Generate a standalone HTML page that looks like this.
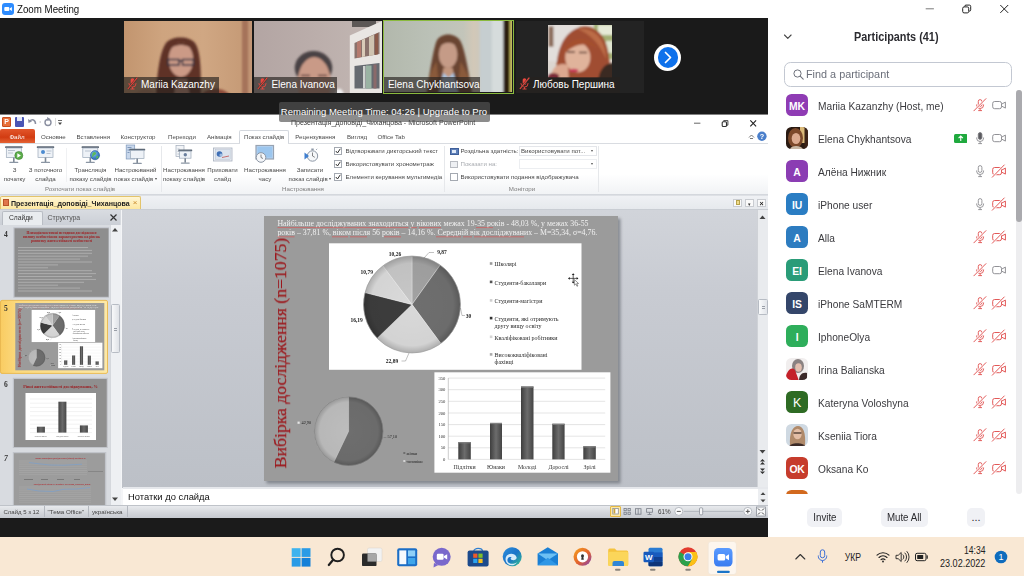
<!DOCTYPE html>
<html lang="uk">
<head>
<meta charset="utf-8">
<title>Zoom Meeting</title>
<style>
*{box-sizing:border-box;margin:0;padding:0}
html,body{width:1024px;height:576px;overflow:hidden;background:#fff}
body{position:relative;font-family:"Liberation Sans",sans-serif;color:#222}
.abs{position:absolute}
/* ---------- zoom title ---------- */
#ztitle{left:0;top:0;width:768px;height:18px;background:#fff}
#ztitle .ico{left:2px;top:3px;width:12px;height:12px;border-radius:3px;background:#2d8cff}
#ztitle .t{left:17px;top:2.5px;font-size:11px;line-height:13px;color:#111;white-space:nowrap;transform-origin:0 50%;transform:scaleX(.885)}
/* ---------- video strip ---------- */
#strip{left:0;top:18.300px;width:768px;height:96px;background:#1a1a1a}
.tile{top:21px;height:72px;overflow:hidden}
.nm{position:absolute;left:0;bottom:0;height:16px;background:rgba(38,34,30,.66);color:#fff;font-size:10px;line-height:16px;padding:0 5px 0 3px;white-space:nowrap}
.nm svg{vertical-align:-2px;margin-right:3px}
#toast{left:278.5px;top:102px;width:211px;height:19.5px;background:rgba(84,84,84,.67);color:#fff;font-size:9.5px;line-height:20.5px;text-align:center;border-radius:2px;white-space:nowrap}
/* ---------- ppt ---------- */
#band{left:0;top:517.5px;width:768px;height:19.5px;background:#1b1b1b}
/* ---------- taskbar ---------- */
#task{left:0;top:537px;width:1024px;height:39px;background:#f9e8d4}
/* ---------- participants ---------- */
#pan{left:768px;top:0;width:256px;height:537px;background:#fff}
</style>
</head>
<body>



<!-- PPT -->
<div id="ppt" class="abs">
<!--PPT_START-->
<style>
#ppt{left:0;top:0;width:768px;height:518px;background:#fff;overflow:hidden;filter:blur(.38px)}
#ppt .r{font-size:6.150px;line-height:8px;color:#4a4a4a;white-space:nowrap}
#ppt .c{text-align:center;transform:translateX(-50%)}
#ppt .tab{top:132.500px}
#ppt .gl{top:185.300px;color:#7d7d7d}
#ppt .sep{top:146px;width:1px;height:46px;background:#e6e8eb}
#ppt .cb{width:8px;height:8px;border:1px solid #a4a9b1;background:#fff}
#ppt .dd{height:10px;border:1px solid #e4e6ea;background:#fff}
</style>
<!-- QAT -->
<div class="abs" style="left:2px;top:117px;width:9px;height:10px;background:#e8703a;border:1px solid #c64e1f;border-radius:1px;color:#fff;font-size:7px;font-weight:bold;line-height:8.500px;text-align:center">P</div>
<div class="abs" style="left:15px;top:117px;width:9px;height:10px;background:#4a55b5;border-radius:1px"></div>
<div class="abs" style="left:17px;top:117px;width:5px;height:4px;background:#e4e8f6"></div>
<svg class="abs" style="left:27px;top:116px" width="40" height="12" viewBox="0 0 40 12"><path d="M2.500 5.500C5 2.500 8.500 3.500 8.500 8" fill="none" stroke="#8a8fa0" stroke-width="1.500"/><path d="M1 3l.5 4 3.500-1.500z" fill="#8a8fa0"/><path d="M12.500 6h1.500" stroke="#aaa" stroke-width=".8"/><circle cx="21" cy="6.500" r="3" fill="none" stroke="#8a8fa0" stroke-width="1.400"/><path d="M20 1l3.500 2-3 2z" fill="#8a8fa0"/><path d="M28.500 2v8" stroke="#ccc" stroke-width=".7"/><path d="M31 6.500h4l-2 2.500z" fill="#444"/><path d="M31 4.500h4" stroke="#444" stroke-width=".8"/></svg>
<div class="abs r" style="left:291px;top:119px;font-size:7.100px;color:#3a3a3a">Презентація_доповіді_Чиханцова - Microsoft PowerPoint</div>
<svg class="abs" style="left:690px;top:116px" width="72" height="14" viewBox="690 116 72 14"><path d="M694 123.200h6.400" stroke="#666" stroke-width="1"/><rect x="722.200" y="121.700" width="4.300" height="4.800" rx="1" fill="none" stroke="#333" stroke-width="1.100"/><path d="M723.700 121.400v-.8h4.200v4.600h-1" fill="none" stroke="#333" stroke-width=".9"/><path d="M750.300 120.300l5.800 6M756.100 120.300l-5.800 6" stroke="#222" stroke-width="1.100"/></svg>

<!-- TABS -->
<div class="abs" style="left:0;top:129px;width:34.500px;height:14.500px;border-radius:2px 2px 0 0;background:linear-gradient(#e2562b,#d23c12 55%,#e86a3a)"></div>
<div class="abs r tab c" style="left:17px;color:#fff">Файл</div>
<div class="abs" style="left:238.500px;top:129.500px;width:50.500px;height:15px;border:1px solid #d3d7dd;border-bottom:none;border-radius:2px 2px 0 0;background:#fff"></div>
<div class="abs r tab" style="left:41px">Основне</div>
<div class="abs r tab" style="left:76.500px">Вставлення</div>
<div class="abs r tab" style="left:120.500px">Конструктор</div>
<div class="abs r tab" style="left:168px">Переходи</div>
<div class="abs r tab" style="left:207px">Анімація</div>
<div class="abs r tab" style="left:244px">Показ слайдів</div>
<div class="abs r tab" style="left:295.300px">Рецензування</div>
<div class="abs r tab" style="left:347px">Вигляд</div>
<div class="abs r tab" style="left:377.500px">Office Tab</div>
<svg class="abs" style="left:746px;top:130px" width="22" height="12" viewBox="0 0 22 12"><path d="M3 7.500l2.500-2.500 2.500 2.500M4 8.500h3" fill="none" stroke="#666" stroke-width=".9"/><circle cx="15.900" cy="6.300" r="4.700" fill="#4a7fcb"/><text x="15.900" y="8.900" font-size="7.300" font-weight="bold" fill="#fff" text-anchor="middle" font-family="Liberation Sans, sans-serif">?</text></svg>

<!-- RIBBON BODY -->
<div class="abs" style="left:0;top:142.700px;width:768px;height:51.800px;border-top:1px solid #d9dce1;background:linear-gradient(#fff 60%,#f1f3f5);z-index:0"></div>
<div class="abs" style="left:239.500px;top:143px;width:48.500px;height:2px;background:#fff"></div>
<div class="abs" style="left:0;top:193.500px;width:768px;height:3px;background:linear-gradient(#cfd3d9,#eceef1)"></div>
<div class="abs sep" style="left:160.500px"></div>
<div class="abs sep" style="left:444px"></div>
<div class="abs sep" style="left:597.500px"></div>
<div class="abs sep" style="left:66px;top:148px;height:34px;background:#f0f1f3"></div>
<!--ICONS_START-->
<svg class="abs" style="left:0;top:143px" width="340" height="24" viewBox="0 143 340 24">
<defs><radialGradient id="gl" cx=".4" cy=".35" r=".7"><stop offset="0" stop-color="#7fc0f0"/><stop offset="1" stop-color="#1f5fae"/></radialGradient></defs>
<rect x="5.1" y="146.3" width="17.4" height="1.700" rx=".5" fill="#5d6876"/><rect x="6.3" y="148.0" width="15.0" height="9.5" fill="#eef2f7" stroke="#9ba8b8" stroke-width=".7"/><rect x="13.0" y="157.5" width="1.600" height="4.500" fill="#7d8896"/><rect x="9.3" y="161.7" width="9" height="1.300" rx=".6" fill="#8b96a4"/><rect x="8" y="150" width="7" height="1" fill="#b8c2cf"/><rect x="8" y="152.500" width="5" height="1" fill="#b8c2cf"/><circle cx="18.800" cy="155.500" r="4" fill="#5cae4a" stroke="#3d7f33" stroke-width=".6"/><path d="M17.300 153.200l3.600 2.300-3.600 2.300z" fill="#fff"/>
<rect x="36.8" y="146.3" width="17.4" height="1.700" rx=".5" fill="#5d6876"/><rect x="38.0" y="148.0" width="15.0" height="9.5" fill="#eef2f7" stroke="#9ba8b8" stroke-width=".7"/><rect x="44.7" y="157.5" width="1.600" height="4.500" fill="#7d8896"/><rect x="41.0" y="161.7" width="9" height="1.300" rx=".6" fill="#8b96a4"/><circle cx="43" cy="152" r="2" fill="#4b8bd0"/><rect x="46.500" y="150.500" width="5" height="1" fill="#b8c2cf"/><rect x="46.500" y="153" width="4" height="1" fill="#b8c2cf"/>
<rect x="81.6" y="146.3" width="17.4" height="1.700" rx=".5" fill="#5d6876"/><rect x="82.8" y="148.0" width="15.0" height="9.5" fill="#eef2f7" stroke="#9ba8b8" stroke-width=".7"/><rect x="89.5" y="157.5" width="1.600" height="4.500" fill="#7d8896"/><rect x="85.8" y="161.7" width="9" height="1.300" rx=".6" fill="#8b96a4"/><rect x="85" y="150.500" width="6" height="1" fill="#b8c2cf"/><circle cx="95" cy="155.200" r="4.600" fill="url(#gl)" stroke="#1c4f93" stroke-width=".5"/><path d="M92.500 153c1.500-1.500 3-1 3.500 0s-1 2-2 2.500-1 2-2 1.500z" fill="#5cb85c"/><path d="M96.500 156c1-.5 2 0 2 1s-1.500 2-2.500 1.500z" fill="#5cb85c"/>
<rect x="126.200" y="145" width="8.500" height="14" fill="#c9d8ec" stroke="#7f98bb" stroke-width=".7"/><rect x="127.500" y="147" width="4" height="1" fill="#7f98bb"/><rect x="127.500" y="149.500" width="3" height="1" fill="#7f98bb"/><rect x="127.500" y="152" width="2" height="1" fill="#7f98bb"/>
<rect x="129.3" y="148.8" width="15.9" height="1.700" rx=".5" fill="#5d6876"/><rect x="130.5" y="150.5" width="13.5" height="8.0" fill="#eef2f7" stroke="#9ba8b8" stroke-width=".7"/><rect x="136.4" y="158.5" width="1.600" height="4.500" fill="#7d8896"/><rect x="132.8" y="162.7" width="9" height="1.300" rx=".6" fill="#8b96a4"/>
<rect x="176" y="145.500" width="8" height="11" fill="#f2f4f7" stroke="#a3adba" stroke-width=".7"/><path d="M177.500 149h2M177.500 151.500h2M177.500 154h2" stroke="#a3adba" stroke-width=".7"/>
<rect x="178.3" y="149.5" width="13.9" height="1.700" rx=".5" fill="#5d6876"/><rect x="179.5" y="151.2" width="11.5" height="7.0" fill="#eef2f7" stroke="#9ba8b8" stroke-width=".7"/><rect x="184.4" y="158.2" width="1.600" height="4.500" fill="#7d8896"/><rect x="180.8" y="162.4" width="9" height="1.300" rx=".6" fill="#8b96a4"/><circle cx="185.300" cy="154.800" r="1.700" fill="#6a7f9e"/>
<rect x="213.500" y="148" width="18.500" height="13" fill="#eef1f5" stroke="#a7b0bd" stroke-width=".8"/><rect x="215.200" y="149.700" width="15" height="9.600" fill="#dbe3ee" stroke="#b5c0cf" stroke-width=".5"/><circle cx="219.500" cy="154" r="2.800" fill="#3f6fb5"/><path d="M222 157.500l7-1.500" stroke="#c05050" stroke-width=".8"/><circle cx="221" cy="155" r="1.600" fill="#9dbbe2"/>
<rect x="256" y="145.500" width="17.500" height="13.500" fill="#b4d3f2" stroke="#98a3b2" stroke-width="1.200"/><rect x="257.500" y="147" width="14.500" height="10.500" fill="#9cc6ee"/><circle cx="261" cy="157.500" r="4.800" fill="#f4f6f9" stroke="#8b95a3" stroke-width="1"/><path d="M261 154.500v3l2 1" fill="none" stroke="#555" stroke-width=".7"/>
<circle cx="312.500" cy="156" r="5.200" fill="#f6f8fa" stroke="#8d97a5" stroke-width="1"/><path d="M312.500 152.500v3.500l2.300 1.300" fill="none" stroke="#555" stroke-width=".7"/><rect x="311.300" y="148.500" width="2.400" height="1.800" fill="#8d97a5"/><path d="M304.500 152.500l4.500 3.500-4.500 3.500z" fill="#3f7fd0"/><path d="M316 150l1.200-1.200" stroke="#8d97a5" stroke-width=".8"/>
</svg>
<!--ICONS_END-->
<div class="abs r c" style="left:14.500px;top:166px;line-height:8.800px">З<br>початку</div>
<div class="abs r c" style="left:45.500px;top:166px;line-height:8.800px">З поточного<br>слайда</div>
<div class="abs r c" style="left:90.500px;top:166px;line-height:8.800px">Трансляція<br>показу слайдів</div>
<div class="abs r c" style="left:135.500px;top:166px;line-height:8.800px">Настроюваний<br>показ слайдів <span style="font-size:4px;vertical-align:1px">▾</span></div>
<div class="abs r c" style="left:184px;top:166px;line-height:8.800px">Настроювання<br>показу слайдів</div>
<div class="abs r c" style="left:222.500px;top:166px;line-height:8.800px">Приховати<br>слайд</div>
<div class="abs r c" style="left:265px;top:166px;line-height:8.800px">Настроювання<br>часу</div>
<div class="abs r c" style="left:310px;top:166px;line-height:8.800px">Записати<br>показ слайдів <span style="font-size:4px;vertical-align:1px">▾</span></div>
<div class="abs r gl c" style="left:80px">Розпочати показ слайдів</div>
<div class="abs r gl c" style="left:303px">Настроювання</div>
<div class="abs r gl c" style="left:522px">Монітори</div>

<div class="abs cb" style="left:333.500px;top:147px"></div>
<div class="abs cb" style="left:333.500px;top:160px"></div>
<div class="abs cb" style="left:333.500px;top:173px"></div>
<svg class="abs" style="left:333.500px;top:147px" width="8" height="34" viewBox="0 0 8 34"><path d="M1.800 4l1.700 2 2.800-4.200M1.800 17l1.700 2 2.800-4.200M1.800 30l1.700 2 2.800-4.200" fill="none" stroke="#333" stroke-width="1"/></svg>
<div class="abs r" style="left:345.500px;top:147px">Відтворювати дикторський текст</div>
<div class="abs r" style="left:345.500px;top:160px">Використовувати хронометраж</div>
<div class="abs r" style="left:345.500px;top:173px">Елементи керування мультимедіа</div>

<div class="abs" style="left:449.500px;top:148px;width:9px;height:6.500px;border:1px solid #3f5f9a;background:#5d7fb8"></div>
<div class="abs" style="left:452px;top:150px;width:4px;height:2.500px;background:#dfe9f7"></div>
<div class="abs" style="left:449.500px;top:161px;width:8.500px;height:6.500px;border:1px solid #b9bcc2;background:#eef0f3"></div>
<div class="abs r" style="left:460.500px;top:147px">Роздільна здатність:</div>
<div class="abs r" style="left:460.500px;top:160px;color:#a9acb1">Показати на:</div>
<div class="abs dd" style="left:518.500px;top:146px;width:78px"></div>
<div class="abs dd" style="left:518.500px;top:159px;width:78px;border-color:#eceef1"></div>
<div class="abs r" style="left:521px;top:147px">Використовувати пот...</div>
<div class="abs r" style="left:590.500px;top:147px;font-size:4px;color:#555">▾</div>
<div class="abs r" style="left:590.500px;top:160px;font-size:4px;color:#555">▾</div>
<div class="abs cb" style="left:449.500px;top:173px"></div>
<div class="abs r" style="left:460.500px;top:173px">Використовувати подання відображувача</div>

<!-- DOC TAB BAR -->
<div class="abs" style="left:0;top:196px;width:768px;height:13.500px;background:linear-gradient(#eff1f4,#e6e9ed);border-bottom:1px solid #c9cdd3"></div>
<div class="abs" style="left:0;top:196.400px;width:140.500px;height:12.800px;border:1px solid #e3c46b;border-bottom:none;border-radius:2px 2px 0 0;background:linear-gradient(#fff6d6,#fde7a0)"></div>
<div class="abs" style="left:3px;top:199px;width:6px;height:7px;background:#e0764a;border:1px solid #b9532a"></div>
<div class="abs" style="left:11px;top:198.800px;font-size:7.050px;font-weight:bold;line-height:9px;color:#222;white-space:nowrap">Презентація_доповіді_Чиханцова</div>
<div class="abs" style="left:132.800px;top:198.300px;font-size:8px;line-height:9px;color:#c98a2a">×</div>
<div class="abs" style="left:733px;top:198.500px;width:9px;height:8.500px;border:1px solid #c9ccd1;background:#fafafa"></div>
<div class="abs" style="left:735.500px;top:200.300px;width:4px;height:5px;background:#f0dc8a;border:.5px solid #b7a24a"></div>
<div class="abs" style="left:745px;top:198.500px;width:9px;height:8.500px;border:1px solid #c9ccd1;background:#fafafa;font-size:5px;line-height:8px;text-align:center;color:#333">▾</div>
<div class="abs" style="left:757px;top:198.500px;width:9px;height:8.500px;border:1px solid #c9ccd1;background:#fafafa;font-size:7px;font-weight:bold;line-height:7px;text-align:center;color:#222">×</div>

<!-- LEFT PANE -->
<div class="abs" style="left:0;top:209.500px;width:122.500px;height:295.500px;background:#d8dbe0;border-right:2px solid #f4f5f7"></div>
<div class="abs" style="left:0;top:209.500px;width:120px;height:15.300px;background:linear-gradient(#d9dce1,#cbcfd6)"></div>
<div class="abs" style="left:1.500px;top:210.500px;width:41px;height:14.500px;background:#e9ecef;border:1px solid #b9bdc4;border-bottom:none;border-radius:2px 2px 0 0"></div>
<div class="abs r" style="left:9px;top:212.500px;font-size:6.700px;line-height:10px;color:#333">Слайди</div>
<div class="abs r" style="left:47.500px;top:212.500px;font-size:6.900px;line-height:10px;color:#555">Структура</div>
<svg class="abs" style="left:109px;top:213px" width="9" height="9" viewBox="0 0 9 9"><path d="M1.500 1.500l6 6M7.500 1.500l-6 6" stroke="#333" stroke-width="1.200"/></svg>
<div class="abs" style="left:109.500px;top:225px;width:11px;height:280px;background:#eef0f3;border-left:1px solid #d5d8dd"></div>
<div class="abs" style="left:110.500px;top:304px;width:9.500px;height:49px;background:linear-gradient(90deg,#f8f9fa,#dfe2e7);border:1px solid #b7bcc4;border-radius:1.500px"></div>
<div class="abs" style="left:114px;top:327.500px;width:3px;height:3px;border-top:1px solid #9a9fa8;border-bottom:1px solid #9a9fa8"></div>
<svg class="abs" style="left:110px;top:225px" width="10" height="280" viewBox="0 0 10 280"><path d="M2 6.500l3-3.500 3 3.500z" fill="#444"/><path d="M2 272.500l3 3.500 3-3.500z" fill="#444"/></svg>
<!--THUMBS_START-->
<svg class="abs" style="left:0;top:225px" width="109" height="279.500" viewBox="0 225 109 279.500" font-family="Liberation Serif, serif">
<defs><linearGradient id="hl" x1="0" x2="1"><stop offset="0" stop-color="#f9cc62"/><stop offset=".15" stop-color="#fbd97e"/><stop offset="1" stop-color="#fde9a8"/></linearGradient><linearGradient id="bg2" x1="0" x2="1"><stop offset="0" stop-color="#444"/><stop offset=".5" stop-color="#6a6a6a"/><stop offset="1" stop-color="#484848"/></linearGradient></defs>
<rect x="13.300" y="227.300" width="96" height="70.500" fill="#c1c4ca"/><rect x="14.500" y="228.300" width="94" height="68.500" fill="#8e8e8e"/>
<g font-size="3.700" font-weight="bold" fill="#a02226" text-anchor="middle"><text x="61.500" y="234">Психодіагностичні методики дослідження</text><text x="61.500" y="238.200">впливу особистісних характеристик на рівень</text><text x="61.500" y="242.400">розвитку життєстійкості особистості</text></g>
<g stroke="#c4c4c4" stroke-width=".7" opacity=".8">
<path d="M18 247.5h70"/>
<path d="M18 250.4h74"/>
<path d="M18 253.3h74"/>
<path d="M18 256.2h70"/>
<path d="M18 259.1h62"/>
<path d="M18 262.0h74"/>
<path d="M18 264.9h40"/>
<path d="M18 267.8h30"/>
<path d="M18 270.7h74"/>
<path d="M18 273.6h78"/>
<path d="M18 276.5h74"/>
<path d="M18 279.4h78"/>
<path d="M18 282.3h66"/>
<path d="M18 285.2h40"/>
<path d="M18 288.1h62"/>
<path d="M18 291.0h74"/>
</g>
<rect x=".500" y="300.400" width="107" height="73" rx="1.500" fill="url(#hl)" stroke="#eab23c" stroke-width=".8"/>
<use href="#slideg" transform="translate(15.300 303) scale(.2514 .2540) translate(-264 -216)"/><use href="#slideg2" transform="translate(15.300 303) scale(.2514 .2540) translate(-264 -216)"/>
<rect x="12.800" y="377.800" width="95" height="70.200" fill="#c1c4ca"/><rect x="14" y="379" width="92.700" height="68" fill="#8f8f8f"/>
<text x="60.500" y="388.300" font-size="4.200" font-weight="bold" fill="#9c1c20" text-anchor="middle">Рівні життєстійкості досліджуваних, %</text>
<rect x="25.500" y="393" width="70.500" height="47" fill="#fff"/>
<g stroke="#d5d5d5" stroke-width=".35"><path d="M30 432.6h62"/><path d="M30 428.4h62"/><path d="M30 424.2h62"/><path d="M30 420.0h62"/><path d="M30 415.8h62"/><path d="M30 411.6h62"/><path d="M30 407.4h62"/><path d="M30 403.2h62"/><path d="M30 399.0h62"/></g>
<rect x="36.900" y="426.700" width="8" height="5.900" fill="url(#bg2)"/><rect x="58.400" y="401.700" width="8" height="30.900" fill="url(#bg2)"/><rect x="79.900" y="425.400" width="8" height="7.200" fill="url(#bg2)"/>
<g font-size="1.900" fill="#444" text-anchor="middle"><text x="40.900" y="436.500">низький рівень</text><text x="62.400" y="436.500">середній рівень</text><text x="83.900" y="436.500">високий рівень</text></g>
<rect x="12.800" y="452" width="93.500" height="54" fill="#c1c4ca"/><rect x="13.900" y="453.200" width="91" height="53" fill="#9c9c9c"/>
<g font-size="2.050" font-weight="bold" fill="#b23036" text-anchor="middle"><text x="60.500" y="459">Вплив самооцінки досліджуваних (жінки) на рівень їх</text><text x="62" y="485">Досліджувані жінки та чоловіки: залучення, контроль, ризик</text></g>
<g stroke="#b9b9b9" stroke-width=".3"><path d="M19 461.0h68"/><path d="M19 462.9h68"/><path d="M19 464.8h68"/><path d="M19 466.7h68"/><path d="M19 468.6h68"/><path d="M19 470.5h68"/><path d="M19 472.4h68"/><path d="M19 474.3h68"/><path d="M19 487.0h72"/><path d="M19 488.9h72"/><path d="M19 490.8h72"/><path d="M19 492.7h72"/><path d="M19 494.6h72"/><path d="M19 496.5h72"/><path d="M19 498.4h72"/><path d="M19 500.3h72"/><path d="M19 502.2h72"/></g>
<path d="M29 462.500l9 1.200 12 1.300 14 .2 18-1" fill="none" stroke="#7f9fc6" stroke-width=".8"/><path d="M27 489l12 2 14 .5 11-2.300 12-.2 14-1.500" fill="none" stroke="#7f9fc6" stroke-width=".8"/>
<path d="M88 471.500h15" stroke="#666" stroke-width=".4"/><path d="M24 479.500h9M41 479.500h7M57 479.500h7M74 479.500h6" stroke="#555" stroke-width=".5"/>
<g font-size="7.500" font-weight="bold" fill="#333"><text x="4" y="236.500">4</text><text x="4" y="311">5</text><text x="4" y="386.500">6</text><text x="4" y="461" font-style="italic">7</text></g>
</svg>
<!--THUMBS_END-->
<!-- MAIN AREA -->
<div class="abs" style="left:122px;top:209.500px;width:635.500px;height:278px;background:linear-gradient(#d1d4da,#c8cbd2 30%,#bcc0c7)"></div>
<!--SLIDE_START-->
<svg class="abs" style="left:260px;top:212px" width="364" height="276" viewBox="260 212 364 276" font-family="Liberation Serif, serif">
<defs>
<radialGradient id="pg" cx=".5" cy=".5" r=".5"><stop offset="0" stop-color="#000" stop-opacity="0"/><stop offset=".85" stop-color="#000" stop-opacity=".03"/><stop offset="1" stop-color="#000" stop-opacity=".2"/></radialGradient>
<linearGradient id="bg" x1="0" x2="1"><stop offset="0" stop-color="#3e3e3e"/><stop offset=".5" stop-color="#6c6c6c"/><stop offset="1" stop-color="#444"/></linearGradient>
<filter id="sb" x="-5%" y="-5%" width="110%" height="110%"><feGaussianBlur stdDeviation="1.6"/></filter>
<filter id="tb" x="-5%" y="-5%" width="110%" height="110%"><feGaussianBlur stdDeviation=".25"/></filter>
</defs>
<rect x="266.500" y="218.500" width="354" height="265" fill="#6f737a" opacity=".75" filter="url(#sb)"/>
<g id="slideg"><rect x="264" y="216" width="354" height="265" fill="#9b9b9b"/>
<g font-size="7.850" fill="#f1f1f1" filter="url(#tb)"><text x="277.400" y="226">Найбільше досліджуваних знаходиться у вікових межах 19-35 років  - 48,03 %, у межах 36-55</text><text x="277.400" y="235.200">років – 37,81 %, віком після 56 років – 14,16 %. Середній вік досліджуваних – М=35,34, σ=4,76.</text></g>
<g stroke="#d25a5a" stroke-width=".8" opacity=".9"><path d="M277.500 227.600h131M411 227.600h6M419 227.600h22M476 227.600h17"/><path d="M277.500 236.800h17M332 236.800h16M350 236.800h17M384 236.800h17M436 236.800h25M463 236.800h9M474 236.800h50"/></g>
<text transform="translate(286 468.300) rotate(-90)" font-size="17.700" fill="#9c1a1e" stroke="#9c1a1e" stroke-width=".25" textLength="230.500" lengthAdjust="spacingAndGlyphs" filter="url(#tb)">Вибірка дослідження (n=1075)</text>
<rect x="329" y="243.300" width="252.500" height="126.500" fill="#fff"/>
<path d="M412.0 304.5L412.00 256.00A48.5 48.5 0 0 1 440.19 265.03Z" fill="#a2a2a2" stroke="#f2f2f2" stroke-width=".35"/>
<path d="M412.0 304.5L440.19 265.03A48.5 48.5 0 0 1 440.83 343.50Z" fill="#6f6f6f" stroke="#f2f2f2" stroke-width=".35"/>
<path d="M412.0 304.5L440.83 343.50A48.5 48.5 0 0 1 377.15 338.23Z" fill="#d9d9d9" stroke="#f2f2f2" stroke-width=".35"/>
<path d="M412.0 304.5L377.15 338.23A48.5 48.5 0 0 1 364.99 292.59Z" fill="#3d3d3d" stroke="#f2f2f2" stroke-width=".35"/>
<path d="M412.0 304.5L364.99 292.59A48.5 48.5 0 0 1 382.86 265.73Z" fill="#dadada" stroke="#f2f2f2" stroke-width=".35"/>
<path d="M412.0 304.5L382.86 265.73A48.5 48.5 0 0 1 412.00 256.00Z" fill="#c7c7c7" stroke="#f2f2f2" stroke-width=".35"/>
<circle cx="412" cy="304.5" r="48.5" fill="url(#pg)"/>
<circle cx="412" cy="304.5" r="48.5" fill="none" stroke="#8a8a8a" stroke-width=".5"/>
<g fill="none" stroke="#666" stroke-width=".4"><path d="M424 258l5-5.500h5"/><path d="M460.500 308l1.500 7.500h3"/><path d="M409 353l-3.500 8h-4"/></g>
<g font-size="5.500" font-weight="bold" fill="#222" text-anchor="middle" filter="url(#tb)">
<text x="442" y="253.5">9,87</text>
<text x="395" y="256">10,26</text>
<text x="366.7" y="274">10,79</text>
<text x="356.6" y="322">16,19</text>
<text x="392" y="363.2">22,89</text>
<text x="468.5" y="318">30</text>
</g>
<g font-size="6" fill="#2a2a2a" filter="url(#tb)">
<rect x="489.800" y="262.2" width="2.600" height="2.600" fill="#9a9a9a"/><text x="494.500" y="266.2">Школярі</text>
<rect x="489.800" y="280.6" width="2.600" height="2.600" fill="#555"/><text x="494.500" y="284.6">Студенти-бакалаври</text>
<rect x="489.800" y="299.1" width="2.600" height="2.600" fill="#cfcfcf"/><text x="494.500" y="303.1">Студенти-магістри</text>
<rect x="489.800" y="316.8" width="2.600" height="2.600" fill="#333"/><text x="494.500" y="320.8">Студенти, які отримують</text>
<rect x="489.800" y="335.5" width="2.600" height="2.600" fill="#d5d5d5"/><text x="494.500" y="339.5">Кваліфіковані робітники</text>
<rect x="489.800" y="353.1" width="2.600" height="2.600" fill="#aaa"/><text x="494.500" y="357.1">Висококваліфіковані</text>
<text x="494.500" y="328.300">другу вищу освіту</text><text x="494.500" y="364.300">фахівці</text>
</g>
</g><g transform="translate(573.200 278.400) scale(.8)" stroke="#222" stroke-width=".9" fill="none"><path d="M0 -5.500v11M-5.500 0h11"/><path d="M0 -6.500l-1.800 2.200h3.600zM0 6.500l-1.800-2.200h3.600zM-6.500 0l2.200-1.800v3.600zM6.500 0l-2.200-1.800v3.600z" fill="#222" stroke="none"/><path d="M1.500 1.500l0 7 1.800-1.600 1.400 3 1.100-.5-1.400-2.900 2.300-.2z" fill="#fff" stroke="#222" stroke-width=".6"/></g>
<g id="slideg2"><rect x="434.400" y="372.300" width="176" height="100.400" fill="#fff"/>
<g stroke="#c9c9c9" stroke-width=".5">
<path d="M448.300 459.4H605.200"/>
<path d="M448.300 447.8H605.200"/>
<path d="M448.300 436.2H605.200"/>
<path d="M448.300 424.6H605.200"/>
<path d="M448.300 413.0H605.200"/>
<path d="M448.300 401.3H605.200"/>
<path d="M448.300 389.7H605.200"/>
<path d="M448.300 378.1H605.200"/>
</g>
<path d="M448.300 378V459.400" stroke="#999" stroke-width=".5"/>
<g font-size="4.600" fill="#333" text-anchor="end" filter="url(#tb)">
<text x="445.300" y="461.0">0</text>
<text x="445.300" y="449.4">50</text>
<text x="445.300" y="437.8">100</text>
<text x="445.300" y="426.2">150</text>
<text x="445.300" y="414.6">200</text>
<text x="445.300" y="402.9">250</text>
<text x="445.300" y="391.3">300</text>
<text x="445.300" y="379.7">350</text>
</g>
<rect x="458.3" y="442.1" width="12.5" height="17.30" fill="url(#bg)"/>
<rect x="458.3" y="442.1" width="12.5" height="1.200" fill="#808080"/>
<rect x="490" y="422.9" width="12.0" height="36.50" fill="url(#bg)"/>
<rect x="490" y="422.9" width="12.0" height="1.200" fill="#808080"/>
<rect x="521" y="386.5" width="12.5" height="72.90" fill="url(#bg)"/>
<rect x="521" y="386.5" width="12.5" height="1.200" fill="#808080"/>
<rect x="552.3" y="423.75" width="12.3" height="35.65" fill="url(#bg)"/>
<rect x="552.3" y="423.75" width="12.3" height="1.200" fill="#808080"/>
<rect x="583.3" y="446.25" width="12.5" height="13.15" fill="url(#bg)"/>
<rect x="583.3" y="446.25" width="12.5" height="1.200" fill="#808080"/>
<g font-size="5.900" fill="#333" text-anchor="middle" filter="url(#tb)">
<text x="464.6" y="468.600">Підлітки</text>
<text x="496.0" y="468.600">Юнаки</text>
<text x="527.2" y="468.600">Молоді</text>
<text x="558.5" y="468.600">Дорослі</text>
<text x="589.5" y="468.600">Зрілі</text>
</g>
<path d="M348.7 431.2L348.70 396.90A34.3 34.3 0 1 1 333.90 462.14Z" fill="#6e6e6e" stroke="#888" stroke-width=".3"/>
<path d="M348.7 431.2L333.90 462.14A34.3 34.3 0 0 1 348.70 396.90Z" fill="#bdbdbd" stroke="#ddd" stroke-width=".3"/>
<circle cx="348.7" cy="431.2" r="34.3" fill="url(#pg)"/>
<circle cx="348.7" cy="431.2" r="34.3" fill="none" stroke="#7a7a7a" stroke-width=".6"/>
<g font-size="4.300" fill="#222" filter="url(#tb)"><rect x="297.500" y="421.600" width="2.200" height="2.200" fill="#e6e6e6"/><text x="301.500" y="424.400">42,90</text><text x="387.500" y="438">57,10</text><path d="M383.500 437.500h3" stroke="#666" stroke-width=".4"/><rect x="403.300" y="452" width="2" height="2" fill="#6e6e6e"/><text x="406.500" y="454.600">жінки</text><rect x="403.300" y="460" width="2" height="2" fill="#d5d5d5"/><text x="406.500" y="462.600">чоловіки</text></g>
</g></svg>
<!--SLIDE_END-->
<div class="abs" style="left:757px;top:209.500px;width:11px;height:278.500px;background:#e9ebee;border-left:1px solid #cfd2d7"></div>
<div class="abs" style="left:758px;top:299px;width:9.500px;height:16px;background:linear-gradient(90deg,#fafbfc,#e1e4e9);border:1px solid #b7bcc4;border-radius:1.500px"></div>
<div class="abs" style="left:761.500px;top:305.500px;width:3px;height:3px;border-top:1px solid #9a9fa8;border-bottom:1px solid #9a9fa8"></div>
<svg class="abs" style="left:757px;top:211px" width="11" height="277" viewBox="0 0 11 277"><path d="M2.500 8l3-3.500 3 3.500z" fill="#444"/><path d="M2.500 239l3 3.500 3-3.500z" fill="#444"/><path d="M3 250.500l2.500-2.500 2.500 2.500zM3 253.500l2.500-2.500 2.500 2.500z" fill="#333"/><path d="M3 257.500l2.500 2.500 2.500-2.500zM3 260.500l2.500 2.500 2.500-2.500z" fill="#333"/></svg>

<!-- NOTES -->
<div class="abs" style="left:123px;top:488px;width:645px;height:16.500px;background:#fff;border-top:1px solid #c9ccd2"></div>
<div class="abs" style="left:123px;top:486.500px;width:645px;height:2px;background:#e6e8ec"></div>
<div class="abs" style="left:128px;top:491px;font-size:9.400px;line-height:12px;color:#111;white-space:nowrap">Нотатки до слайда</div>
<div class="abs" style="left:757.500px;top:488.500px;width:10.500px;height:16px;background:#eceef1"></div>
<svg class="abs" style="left:757.500px;top:488.500px" width="10" height="16" viewBox="0 0 10 16"><path d="M2.500 6l2.500-2.800 2.500 2.800z" fill="#444"/><path d="M2.500 10.500l2.500 2.800 2.500-2.800z" fill="#444"/></svg>

<!-- STATUS BAR -->
<div class="abs" style="left:0;top:504.500px;width:768px;height:13.500px;background:linear-gradient(#e8eaed,#d2d5da 60%,#c6cad0);border-top:1px solid #bfc3c9"></div>
<div class="abs r" style="left:3.500px;top:507.500px;font-size:6px;color:#444">Слайд 5 з 12</div>
<div class="abs r" style="left:47.500px;top:507.500px;font-size:6.200px;color:#444">"Тема Office"</div>
<div class="abs r" style="left:92px;top:507.500px;font-size:6.200px;color:#444">українська</div>
<div class="abs" style="left:43.500px;top:506px;width:1px;height:11px;background:#b4b8bf"></div>
<div class="abs" style="left:88px;top:506px;width:1px;height:11px;background:#b4b8bf"></div>
<div class="abs" style="left:126.500px;top:506px;width:1px;height:11px;background:#b4b8bf"></div>
<div class="abs" style="left:610px;top:505.500px;width:10.500px;height:11px;background:#fde9a6;border:1px solid #e5b945;border-radius:1px"></div>
<svg class="abs" style="left:610px;top:505px" width="158" height="13" viewBox="0 0 158 13"><rect x="2.800" y="3.500" width="5.500" height="5.500" fill="#fff" stroke="#8a8f98" stroke-width=".8"/><rect x="3.500" y="4" width="1.800" height="4.500" fill="#c9a23a"/><g fill="none" stroke="#777c86" stroke-width=".8"><rect x="14" y="3.500" width="2.300" height="2.200"/><rect x="18" y="3.500" width="2.300" height="2.200"/><rect x="14" y="7.200" width="2.300" height="2.200"/><rect x="18" y="7.200" width="2.300" height="2.200"/><rect x="25.500" y="3.700" width="5.500" height="5.500"/><path d="M28.200 3.700v5.500"/><path d="M36.500 3.500h6v3.800h-6zM39.500 7.300v2M37.500 9.500h4"/></g><text x="48" y="9" font-size="6.300" fill="#444" font-family="Liberation Sans, sans-serif">61%</text><circle cx="68.800" cy="6.400" r="4" fill="#fafbfc" stroke="#a9aeb6" stroke-width=".8"/><path d="M66.800 6.400h4" stroke="#555" stroke-width="1"/><path d="M74 6.400h59" stroke="#a9aeb6" stroke-width=".8"/><rect x="89.500" y="2.800" width="3.200" height="7" rx="1" fill="#f4f5f7" stroke="#8a8f98" stroke-width=".8"/><circle cx="137.800" cy="6.400" r="4" fill="#fafbfc" stroke="#a9aeb6" stroke-width=".8"/><path d="M135.800 6.400h4M137.800 4.400v4" stroke="#555" stroke-width="1"/><rect x="146.500" y="2" width="9" height="9" fill="#f6f7f8" stroke="#8a8f98" stroke-width=".8"/><path d="M148 3.500l2 2M154 3.500l-2 2M148 9.500l2-2M154 9.500l-2-2" stroke="#444" stroke-width="1"/></svg>
<!--PPT_END-->
</div>
<div id="band" class="abs"></div>
<!-- VIDEO STRIP -->
<div id="strip" class="abs"></div>
<!--TILES_START-->
<svg width="0" height="0" style="position:absolute">
  <defs>
    <filter id="b1" x="-10%" y="-10%" width="120%" height="120%"><feGaussianBlur stdDeviation="1.1"/></filter>
    <filter id="b2" x="-10%" y="-10%" width="120%" height="120%"><feGaussianBlur stdDeviation="2.2"/></filter>
    <filter id="b0" x="-10%" y="-10%" width="120%" height="120%"><feGaussianBlur stdDeviation=".6"/></filter>
    <symbol id="micoff" viewBox="0 0 12 14">
      <rect x="4" y="1.200" width="4" height="7.300" rx="2" fill="#e8473f"/>
      <path d="M2.200 6.500v.6a3.800 3.800 0 0 0 7.600 0v-.6M6 11v2M3.800 13h4.400" fill="none" stroke="#e8473f" stroke-width="1"/>
      <path d="M11 .8L1.200 12.800" stroke="#3a302a" stroke-width="2.200"/>
      <path d="M11.300 .5L.9 13" stroke="#e8473f" stroke-width="1.150"/>
    </symbol>
  </defs>
</svg>

<!-- tile 1 -->
<div class="tile abs" style="left:124px;width:128px">
  <svg width="128" height="72" viewBox="0 0 128 72" style="display:block">
    <defs><linearGradient id="t1g" x1="0" x2="1"><stop offset="0" stop-color="#c2956f"/><stop offset=".3" stop-color="#cea47f"/><stop offset=".62" stop-color="#d0a783"/><stop offset=".9" stop-color="#c79c78"/></linearGradient></defs>
    <rect width="128" height="72" fill="url(#t1g)"/>
    <g filter="url(#b1)">
      <rect x="118" y="-2" width="6.500" height="80" fill="#a5735a"/>
      <rect x="124.500" y="-2" width="5" height="80" fill="#c39676"/>
      <path d="M32 76 C33 52 36 30 42 22 C47 14.500 66 14.500 71 22 C77 30 77 52 77 76Z" fill="#5f3328"/>
      <ellipse cx="56.900" cy="38.500" rx="12.300" ry="17.500" fill="#cb9a86"/>
      <path d="M44 30 C48 18 66 18 70 30 C64 22 50 22 44 30Z" fill="#5f3328"/>
      <path d="M44 38.500h11v5.500h-11zM58.500 38.500h11v5.500h-11zM55 40h3.500" fill="none" stroke="#2a2c40" stroke-width="1.400"/>
      <path d="M50 76 L52 58 L63 58 L66 76Z" fill="#c6937f"/>
      <path d="M76 76 C80 66 100 64 108 76Z" fill="#8f4e3b"/>
      <path d="M8 76 C16 66 30 64 34 76Z" fill="#a9705a" opacity=".5"/>
    </g>
  </svg>
  <div class="nm" style="width:95px"><svg width="11" height="13"><use href="#micoff"/></svg>Mariia Kazanzhy</div>
</div>

<!-- tile 2 -->
<div class="tile abs" style="left:254.400px;width:128px">
  <svg width="128" height="72" viewBox="0 0 128 72" style="display:block">
    <defs><linearGradient id="t2g" x1="0" x2="1"><stop offset="0" stop-color="#b3a5a3"/><stop offset=".5" stop-color="#bbaeab"/><stop offset="1" stop-color="#c3b8b4"/></linearGradient></defs>
    <rect width="128" height="72" fill="url(#t2g)"/>
    <g filter="url(#b0)">
      <rect x="98" y="-2" width="24" height="8" fill="#5c5856"/>
      <path d="M95.800 14.600 L128 0 L128 74 L95.800 74Z" fill="#e9e6e3"/>
      <path d="M100.500 22 L125.500 11 L125.500 33 L100.500 37.600Z" fill="#8a726c"/>
      <path d="M103 21 L107 19.300 L107 36 L103 36.800Z" fill="#b57a6e"/>
      <path d="M108 19 L111 17.600 L111 35.500 L108 36Z" fill="#d9cbb8"/>
      <path d="M115 16 L120 13.800 L120 34 L115 35Z" fill="#cfc3b0"/>
      <path d="M121 13.500 L124 12 L124 33.300 L121 34Z" fill="#8a5a4a"/>
      <path d="M100.500 45 L125.500 42 L125.500 67.400 L100.500 67.400Z" fill="#666a70"/>
      <rect x="112" y="44.500" width="5.500" height="23" fill="#9ab3a3"/>
      <rect x="109" y="45" width="2.500" height="22.400" fill="#cfd3d0"/>
      <rect x="119.500" y="43.500" width="3" height="24" fill="#8a6a6a"/>
    </g>
    <g filter="url(#b1)">
      <ellipse cx="59.500" cy="47" rx="18.800" ry="17" fill="#4a4244"/>
      <ellipse cx="60.200" cy="62" rx="16.600" ry="26" fill="#c99a87"/>
      <path d="M47 54.500h9M64 54.500h9" stroke="#5a3a34" stroke-width="1.600"/>
      <path d="M80 74 C82 66 88 65 90 74Z" fill="#eeeeee"/>
    </g>
  </svg>
  <div class="nm" style="width:82.300px"><svg width="11" height="13"><use href="#micoff"/></svg>Elena Ivanova</div>
</div>

<!-- tile 3 active -->
<div class="tile abs" style="left:383.400px;top:19.800px;width:131px;height:74px;border:1.500px solid #8aba3e;">
  <svg width="128" height="71" viewBox="0 0 127 70" preserveAspectRatio="none" style="display:block">
    <defs><linearGradient id="t3g" x1="0" x2="1"><stop offset="0" stop-color="#b2b8ac"/><stop offset=".4" stop-color="#bcc2b8"/><stop offset=".62" stop-color="#c3c5ba"/><stop offset=".7" stop-color="#d2c8b8"/><stop offset=".75" stop-color="#cdc8bc"/></linearGradient></defs>
    <rect width="127" height="70" fill="url(#t3g)"/>
    <g filter="url(#b1)">
      <rect x="95" y="-2" width="24" height="76" fill="#c6ced0"/>
      <rect x="107" y="-2" width="12" height="76" fill="#d6dcdc"/>
      <rect x="118.500" y="-2" width="6.500" height="76" fill="#2a1a10"/>
      <rect x="124.600" y="-2" width="4" height="76" fill="#c4bc5e"/>
      <path d="M42 74 C45 52 49 28 52 20 C56 11 71 11 76 20 C81 30 84 52 88 74Z" fill="#6a4430"/>
      <path d="M44 60 C46 50 50 44 52 40 L54 58Z M86 60 C82 50 78 44 76 40 L74 58Z" fill="#8a5a3a"/>
      <ellipse cx="63.600" cy="33" rx="9.300" ry="13.300" fill="#c59b87"/>
      <path d="M54 26 C57 15 70 15 73.500 26 C68 20 60 20 54 26Z" fill="#6a4430"/>
      <path d="M55 72 L59 46 L68 46 L73 72Z" fill="#c2977f"/>
      <path d="M54 72 L59 51 L64 56 L69 51 L74 72Z" fill="#a9c5e2"/>
    </g>
  </svg>
  <div class="nm" style="padding-left:3.500px;width:95.500px">Elena Chykhantsova</div>
</div>

<!-- tile 4 -->
<div class="tile abs" style="left:516px;width:128px;background:#232323">
  <svg width="64.400" height="52.800" viewBox="0 0 64.400 52.800" style="position:absolute;left:31.800px;top:3.800px">
    <rect width="64.400" height="52.800" fill="#dcd6d0"/>
    <g filter="url(#b1)">
      <rect x="0" y="0" width="30" height="36" fill="#e2dedb"/>
      <rect x=".700" y="1.400" width="4.700" height="20.300" fill="#8a6a58"/>
      <rect x="46" y="-2" width="20" height="36" fill="#a3b074"/>
      <rect x="50" y="0" width="16" height="10" fill="#e6ead6"/>
      <rect x="58" y="16" width="8" height="12" fill="#dfe4cf"/>
      <path d="M9 56 C6 30 14 4 36 1.500 C56 2 64 22 61 56Z" fill="#a04e32"/>
      <path d="M30 4 C46 2 58 14 58 34 C52 20 44 10 30 4Z" fill="#bb6c46"/>
      <ellipse cx="29.800" cy="32.500" rx="12.600" ry="15" fill="#e0b39b"/>
      <path d="M15 30 C18 12 40 8 50 24 C40 16 26 18 15 30Z" fill="#a5502f"/>
      <path d="M19 27h8M31 27.500h8" stroke="#5a3a30" stroke-width="1.300"/>
      <path d="M2.700 56 C2 44 10 36 20 40 L21 56Z" fill="#dca890"/>
      <ellipse cx="25.700" cy="45.400" rx="4.600" ry="1.700" fill="#c8385a"/>
      <path d="M-1 56 C-1 48 6 46 11 50 L11 56Z" fill="#7a2a38"/>
      <path d="M50 56 C52 42 58 38 66 38 L66 56Z" fill="#3a2a24"/>
    </g>
  </svg>
  <div class="nm" style="width:103.600px"><svg width="11" height="13"><use href="#micoff"/></svg>Любовь Першина</div>
</div>

<!-- next arrow -->
<div class="abs" style="left:654.300px;top:43.900px;width:27px;height:27px;border-radius:50%;background:#fff"></div>
<div class="abs" style="left:657.500px;top:47.100px;width:20.600px;height:20.600px;border-radius:50%;background:#0e71eb"></div>
<svg class="abs" style="left:654.300px;top:43.900px" width="27" height="27" viewBox="0 0 27 27"><path d="M11.500 8.500L16.500 13.500L11.500 18.500" fill="none" stroke="#fff" stroke-width="1.700" stroke-linecap="round" stroke-linejoin="round"/></svg>
<!--TILES_END-->
<!-- ZOOM TITLE -->
<div id="ztitle" class="abs">
  <div class="ico abs"></div><svg class="abs" style="left:2px;top:3px" width="12" height="12" viewBox="0 0 12 12"><rect x="2.300" y="4" width="5" height="4" rx=".9" fill="#fff"/><path d="M7.700 5.500l2.200-1.400v3.800l-2.200-1.400z" fill="#fff"/></svg>
  <div class="t abs">Zoom Meeting</div>
</div>
<div class="abs" style="left:0;top:114px;width:768px;height:1px;background:rgba(26,26,26,.55)"></div>
<div id="toast" class="abs">Remaining Meeting Time: 04:26 | Upgrade to Pro</div>

<!-- PARTICIPANTS -->
<div id="pan" class="abs">
<!--PAN_START-->
<style>
#pan .av{position:absolute;left:18px;width:22px;height:22px;border-radius:5.500px;color:#fff;font-weight:bold;font-size:10.400px;line-height:25.800px;text-align:center;overflow:hidden;letter-spacing:-.2px}
#pan .pn{position:absolute;left:49.500px;margin-top:.4px;font-size:11.200px;line-height:14px;color:#3a3a3e;white-space:nowrap;transform-origin:0 50%;transform:scaleX(.91)}
#pan .ic{position:absolute}
#pan .btn span{display:inline-block;transform:scaleX(.9)}
#pan .btn{position:absolute;top:508px;height:19px;border-radius:5px;background:#f0f1f5;font-size:10.800px;line-height:19px;color:#2a2a2e;text-align:center}
</style>
<svg width="0" height="0" style="position:absolute"><defs>
<symbol id="p-moff" viewBox="0 0 14 14"><rect x="5.300" y="1.600" width="3.600" height="6.800" rx="1.800" fill="none" stroke="#e0504f" stroke-width=".9"/><path d="M3.600 6.500v.5a3.500 3.500 0 0 0 7 0v-.5M7.100 10.600v1.900M5.200 12.600h3.800" fill="none" stroke="#e0504f" stroke-width=".9"/><path d="M13 .6L.8 12.900" stroke="#fff" stroke-width="2.200"/><path d="M13.200 .4L.6 13.100" stroke="#e0504f" stroke-width=".95"/></symbol>
<symbol id="p-mon" viewBox="0 0 14 14"><rect x="5.300" y="1.600" width="3.600" height="6.800" rx="1.800" fill="none" stroke="#8b8b90" stroke-width=".9"/><path d="M3.600 6.500v.5a3.500 3.500 0 0 0 7 0v-.5M7.100 10.600v1.900M5.200 12.600h3.800" fill="none" stroke="#8b8b90" stroke-width=".9"/></symbol>
<symbol id="p-monf" viewBox="0 0 14 14"><rect x="5.300" y="1.600" width="3.600" height="6.800" rx="1.800" fill="#5a5a5f" stroke="#77777c" stroke-width=".9"/><path d="M3.600 6.500v.5a3.500 3.500 0 0 0 7 0v-.5M7.100 10.600v1.900M5.200 12.600h3.800" fill="none" stroke="#8b8b90" stroke-width=".9"/></symbol>
<symbol id="p-con" viewBox="0 0 15 14"><rect x="1.700" y="3.500" width="8.800" height="7.200" rx="1.900" fill="none" stroke="#8b8b90" stroke-width=".95"/><path d="M10.700 6.100l3.700-2v6l-3.700-2" fill="none" stroke="#8b8b90" stroke-width=".95" stroke-linejoin="round"/></symbol>
<symbol id="p-coff" viewBox="0 0 15 14"><rect x="1.700" y="3.500" width="8.800" height="7.200" rx="1.900" fill="none" stroke="#e0504f" stroke-width=".95"/><path d="M10.700 6.100l3.700-2v6l-3.700-2" fill="none" stroke="#e0504f" stroke-width=".95" stroke-linejoin="round"/><path d="M13.300 .9L1.200 13.300" stroke="#fff" stroke-width="2.200"/><path d="M13.500 .7L1 13.500" stroke="#e0504f" stroke-width=".95"/></symbol>
</defs></svg>
<svg class="abs" style="left:150px;top:0" width="106" height="20" viewBox="918 0 106 20"><path d="M925.700 8.800h8.200" stroke="#7a7a7a" stroke-width="1"/><rect x="962.700" y="6.900" width="6" height="6" rx="1.400" fill="none" stroke="#222" stroke-width="1"/><path d="M964.700 6.600v-.2a1.300 1.300 0 0 1 1.300-1.300h3.400a1.300 1.300 0 0 1 1.300 1.300v3.400a1.300 1.300 0 0 1-1.300 1.300h-.4" fill="none" stroke="#222" stroke-width="1"/><path d="M1000.300 5l7.900 7.900M1008.200 5l-7.900 7.900" stroke="#222" stroke-width="1"/></svg>
<svg class="abs" style="left:14px;top:32px" width="12" height="10" viewBox="0 0 12 10"><path d="M2.500 3l3.300 3.300L9.100 3" fill="none" stroke="#444" stroke-width="1.100" stroke-linecap="round" stroke-linejoin="round"/></svg>
<div class="abs" style="left:86px;top:29.500px;font-size:12px;font-weight:bold;line-height:15px;color:#2b2b30;white-space:nowrap;transform-origin:0 50%;transform:scaleX(.905)">Participants (41)</div>
<div class="abs" style="left:15.500px;top:61.500px;width:228.500px;height:25.500px;border:1px solid #c3c8d2;border-radius:6.500px;background:#fff"></div>
<svg class="abs" style="left:23.500px;top:67.500px" width="13" height="13" viewBox="0 0 13 13"><circle cx="5.500" cy="5.500" r="3.600" fill="none" stroke="#6e727c" stroke-width="1"/><path d="M8.200 8.200l3 3" stroke="#6e727c" stroke-width="1.100" stroke-linecap="round"/></svg>
<div class="abs" style="left:38px;top:67px;font-size:11.300px;line-height:14px;color:#6b6f7a;white-space:nowrap;transform-origin:0 50%;transform:scaleX(.96)">Find a participant</div>
<div class="abs" style="left:0;top:88px;width:256px;height:406px;overflow:hidden">
<div class="av" style="top:6px;background:#8f3cb4">MK</div>
<div class="pn" style="top:10.5px">Mariia Kazanzhy (Host, me)</div>
<svg class="ic" style="left:205px;top:10px" width="14" height="14"><use href="#p-moff"/></svg>
<svg class="ic" style="left:223px;top:10px" width="15" height="14"><use href="#p-con"/></svg>
<div class="av" style="top:39px"><svg width="22" height="22" viewBox="0 0 22 22" style="display:block"><rect width="22" height="22" fill="#2a1a12"/><g filter="url(#b0)"><rect x="14" y="0" width="5" height="16" fill="#d9b878"/><rect x="18.500" y="0" width="4" height="22" fill="#3a2414"/><ellipse cx="9.500" cy="11" rx="7.500" ry="10" fill="#7b4a2c"/><ellipse cx="10" cy="11.500" rx="4.300" ry="5.500" fill="#dcab90"/><path d="M4 22c1-4 11-4 13 0z" fill="#c9b9a6"/></g></svg></div>
<div class="pn" style="top:43.5px">Elena Chykhantsova</div>
<svg class="ic" style="left:205px;top:43px" width="14" height="14"><use href="#p-monf"/></svg>
<svg class="ic" style="left:223px;top:43px" width="15" height="14"><use href="#p-con"/></svg>
<svg class="ic" style="left:185.800px;top:45.5px" width="13.500" height="9" viewBox="0 0 13.500 9"><rect width="13.500" height="9" rx="1.500" fill="#1fa93e"/><path d="M6.750 2v5M4.600 4.200l2.150-2.200 2.150 2.200" fill="none" stroke="#fff" stroke-width="1.100"/></svg>
<div class="av" style="top:72px;background:#8b3db3">A</div>
<div class="pn" style="top:76.5px">Алёна Нижник</div>
<svg class="ic" style="left:205px;top:76px" width="14" height="14"><use href="#p-mon"/></svg>
<svg class="ic" style="left:223px;top:76px" width="15" height="14"><use href="#p-coff"/></svg>
<div class="av" style="top:105px;background:#2a7dc3">IU</div>
<div class="pn" style="top:109.5px">iPhone user</div>
<svg class="ic" style="left:205px;top:109px" width="14" height="14"><use href="#p-mon"/></svg>
<svg class="ic" style="left:223px;top:109px" width="15" height="14"><use href="#p-coff"/></svg>
<div class="av" style="top:138px;background:#2d7cc0">A</div>
<div class="pn" style="top:142.5px">Alla</div>
<svg class="ic" style="left:205px;top:142px" width="14" height="14"><use href="#p-moff"/></svg>
<svg class="ic" style="left:223px;top:142px" width="15" height="14"><use href="#p-coff"/></svg>
<div class="av" style="top:171px;background:#2a9c78">EI</div>
<div class="pn" style="top:175.5px">Elena Ivanova</div>
<svg class="ic" style="left:205px;top:175px" width="14" height="14"><use href="#p-moff"/></svg>
<svg class="ic" style="left:223px;top:175px" width="15" height="14"><use href="#p-con"/></svg>
<div class="av" style="top:204px;background:#34466a">IS</div>
<div class="pn" style="top:208.5px">iPhone SaMTERM</div>
<svg class="ic" style="left:205px;top:208px" width="14" height="14"><use href="#p-moff"/></svg>
<svg class="ic" style="left:223px;top:208px" width="15" height="14"><use href="#p-coff"/></svg>
<div class="av" style="top:237px;background:#2eae5b">I</div>
<div class="pn" style="top:241.5px">IphoneOlya</div>
<svg class="ic" style="left:205px;top:241px" width="14" height="14"><use href="#p-moff"/></svg>
<svg class="ic" style="left:223px;top:241px" width="15" height="14"><use href="#p-coff"/></svg>
<div class="av" style="top:270px"><svg width="22" height="22" viewBox="0 0 22 22" style="display:block"><rect width="22" height="22" fill="#f1eeee"/><g filter="url(#b0)"><ellipse cx="12" cy="8" rx="6" ry="7" fill="#8a8282"/><ellipse cx="12.500" cy="9.500" rx="3.300" ry="4.200" fill="#e2bfb0"/><path d="M-1 23C0 12 6 8 9 12l4 11z" fill="#c4202a"/><path d="M13 23c0-6 3-9 8-8v8z" fill="#3a2a2a"/></g></svg></div>
<div class="pn" style="top:274.5px">Irina Balianska</div>
<svg class="ic" style="left:205px;top:274px" width="14" height="14"><use href="#p-moff"/></svg>
<svg class="ic" style="left:223px;top:274px" width="15" height="14"><use href="#p-coff"/></svg>
<div class="av" style="top:303px;background:#2e6b24;font-weight:normal;font-size:12.500px;line-height:24px">K</div>
<div class="pn" style="top:307.5px">Kateryna Voloshyna</div>
<svg class="ic" style="left:205px;top:307px" width="14" height="14"><use href="#p-moff"/></svg>
<svg class="ic" style="left:223px;top:307px" width="15" height="14"><use href="#p-coff"/></svg>
<div class="av" style="top:336px"><svg width="22" height="22" viewBox="0 0 22 22" style="display:block"><rect width="22" height="22" fill="#cfd9e2"/><g filter="url(#b0)"><path d="M4 22C3 8 7 2 12 2s8 6 7 20z" fill="#b08a6a"/><ellipse cx="11.500" cy="10" rx="4.200" ry="5.300" fill="#e3bea6"/><path d="M7.500 9h8" stroke="#3a2a22" stroke-width="1.200"/><path d="M3 23c1-5 15-5 17 0z" fill="#3b2c28"/></g></svg></div>
<div class="pn" style="top:340.5px">Kseniia Tiora</div>
<svg class="ic" style="left:205px;top:340px" width="14" height="14"><use href="#p-moff"/></svg>
<svg class="ic" style="left:223px;top:340px" width="15" height="14"><use href="#p-coff"/></svg>
<div class="av" style="top:369px;background:#c63c2c">OK</div>
<div class="pn" style="top:373.5px">Oksana Ko</div>
<svg class="ic" style="left:205px;top:373px" width="14" height="14"><use href="#p-moff"/></svg>
<svg class="ic" style="left:223px;top:373px" width="15" height="14"><use href="#p-coff"/></svg>
<div class="av" style="top:402px;background:#d2691e"></div>
</div>
<div class="abs" style="left:248.300px;top:89.500px;width:5.500px;height:404px;border-radius:3px;background:#ededef"></div>
<div class="abs" style="left:248.300px;top:89.500px;width:5.500px;height:132px;border-radius:3px;background:#aaaaae"></div>
<div class="btn" style="left:39px;width:35px"><span>Invite</span></div>
<div class="btn" style="left:113px;width:47px"><span>Mute All</span></div>
<div class="btn" style="left:199px;width:18px">...</div>
<!--PAN_END-->
</div>

<!-- TASKBAR -->
<div id="task" class="abs">
<!--TASK_START-->
<svg class="abs" style="left:0;top:0" width="1024" height="40" viewBox="0 537 1024 40" font-family="Liberation Sans, sans-serif">
<defs>
<linearGradient id="wg" x1="0" y1="0" x2="1" y2="1"><stop offset="0" stop-color="#4cc2f4"/><stop offset="1" stop-color="#0f6fd2"/></linearGradient>
<linearGradient id="eg" x1="0" y1="0" x2="1" y2="1"><stop offset="0" stop-color="#2f8fdc"/><stop offset=".5" stop-color="#1b74c9"/><stop offset="1" stop-color="#35c28a"/></linearGradient>
<linearGradient id="zg" x1="0" y1="0" x2="0" y2="1"><stop offset="0" stop-color="#5a9bff"/><stop offset="1" stop-color="#3a7cf0"/></linearGradient>
<linearGradient id="avg" x1="0" y1="0" x2="1" y2="1"><stop offset="0" stop-color="#f6a21c"/><stop offset=".55" stop-color="#e2622e"/><stop offset="1" stop-color="#7a3fc0"/></linearGradient>
</defs>
<!-- start -->
<rect x="291.700" y="548.200" width="8.900" height="8.700" fill="#3fb3ee"/><rect x="301.600" y="548.200" width="8.900" height="8.700" fill="#2a9be6"/><rect x="291.700" y="557.900" width="8.900" height="8.700" fill="#2a9be6"/><rect x="301.600" y="557.900" width="8.900" height="8.700" fill="#1480d8"/>
<!-- search -->
<circle cx="337.600" cy="555" r="6.300" fill="none" stroke="#1f1f1f" stroke-width="1.900"/><path d="M333.200 559.800l-4.400 5.200" stroke="#1f1f1f" stroke-width="2.200" stroke-linecap="round"/>
<!-- task view -->
<rect x="367.500" y="548" width="14.500" height="13.500" rx="1.500" fill="#f2f2f2" stroke="#d8d2ca" stroke-width=".5"/><rect x="362" y="553.600" width="14.500" height="12.500" rx="1.200" fill="#2b2b2b"/><rect x="367.500" y="553.600" width="9" height="8" fill="#bdbdbd" opacity=".85"/>
<!-- widgets -->
<rect x="397.200" y="548.300" width="20" height="18" rx="2" fill="#1b6ec6"/><rect x="399.300" y="550.400" width="7" height="13.800" fill="#f5f9fd"/><rect x="408" y="550.400" width="7.200" height="6" fill="#8fd0f7"/><rect x="408" y="558" width="7.200" height="6.200" fill="#3fa6ea"/>
<!-- chat -->
<circle cx="441.700" cy="556.800" r="9" fill="#7a68cc"/><path d="M434 563l-.5 4.500 5-2.500z" fill="#7a68cc"/><rect x="436.800" y="553.800" width="6.800" height="6" rx="1.200" fill="#fff"/><path d="M444 556l3.200-1.800v5.200l-3.200-1.800z" fill="#fff"/>
<!-- store -->
<path d="M473.800 551a4.300 2.600 0 0 1 8.600 0" fill="none" stroke="#2f7fd0" stroke-width="1.200"/><rect x="467.600" y="550.500" width="21" height="16" rx="2" fill="#1c4a8c"/><rect x="473.200" y="553.600" width="4.200" height="4.200" fill="#ef5a2a"/><rect x="478.400" y="553.600" width="4.200" height="4.200" fill="#7fbf2a"/><rect x="473.200" y="558.800" width="4.200" height="4.200" fill="#2aa3ef"/><rect x="478.400" y="558.800" width="4.200" height="4.200" fill="#f8be1e"/>
<!-- edge -->
<circle cx="512.200" cy="556.800" r="9.500" fill="url(#eg)"/><path d="M505.500 559c0-6 9-7 11-2 .8 2.500-2 3.500-4.500 3-2-.5-1.500-2.800 0-2.800-3-1-5 1-4.500 3.500.5 3 5 4.500 9.500 1.500-2.500 5-11.500 4-11.500-3.200z" fill="#e9f6ff" opacity=".9"/>
<!-- mail -->
<path d="M537.600 553.500l10.200-6.300 10.200 6.300v11.700h-20.400z" fill="#1a7fd4"/><path d="M537.600 553.500l10.200 6.800 10.200-6.800z" fill="#6cc0f4"/><path d="M537.600 565.200l10.200-7.500 10.200 7.500z" fill="#2f97e6"/>
<!-- secure browser -->
<circle cx="582.500" cy="556.800" r="9" fill="url(#avg)"/><circle cx="582.500" cy="556.800" r="5.600" fill="#fff"/><circle cx="582.500" cy="555.700" r="1.500" fill="#333"/><path d="M581.700 556.500h1.600l.5 3.200h-2.600z" fill="#333"/>
<!-- folder -->
<path d="M608.200 550a1.500 1.500 0 0 1 1.500-1.500h5l2 2h10a1.500 1.500 0 0 1 1.500 1.500v12.500a1.500 1.500 0 0 1-1.500 1.500h-17a1.500 1.500 0 0 1-1.500-1.500z" fill="#f5c33e"/><rect x="608.200" y="551.800" width="20" height="14.200" rx="1.500" fill="#fbd65a"/><path d="M612.500 566v-3a2 2 0 0 1 2-2h7.500a2 2 0 0 1 2 2v3z" fill="#2f86d6"/>
<rect x="615" y="568.800" width="5.500" height="2" rx="1" fill="#8a847c"/>
<!-- word -->
<rect x="648.500" y="547.800" width="14" height="18.400" rx="1.500" fill="#2b7cd3"/><rect x="648.500" y="552.400" width="14" height="4.600" fill="#185abd"/><rect x="648.500" y="557" width="14" height="4.600" fill="#103f91"/><rect x="648.500" y="561.600" width="14" height="4.600" rx="1" fill="#0d3478"/><rect x="643.500" y="551.800" width="10.500" height="10.500" rx="1.200" fill="#185abd"/><text x="648.750" y="560.300" font-size="8" font-weight="bold" fill="#fff" text-anchor="middle">W</text>
<rect x="650" y="568.800" width="5.500" height="2" rx="1" fill="#8a847c"/>
<!-- chrome -->
<circle cx="688" cy="556.800" r="9.500" fill="#e33b2e"/><path d="M688 556.800L679.770 561.550A9.500 9.500 0 0 0 688 566.300L692.750 558.800z" fill="#2ba24c"/><path d="M679.770 561.550A9.500 9.500 0 0 1 679.770 552.050L688 556.800z" fill="#2ba24c"/><path d="M688 566.300A9.500 9.500 0 0 0 696.230 552.050H688L692.100 559.200z" fill="#fbc116"/><circle cx="688" cy="556.800" r="4.500" fill="#fff"/><circle cx="688" cy="556.800" r="3.500" fill="#3b7de8"/>
<rect x="685.300" y="568.800" width="5.500" height="2" rx="1" fill="#8a847c"/>
<!-- zoom -->
<rect x="708.200" y="541.500" width="28.200" height="33" rx="3" fill="#fdf6ee" stroke="#efe3d4" stroke-width=".6"/><rect x="714" y="548" width="18.500" height="18.500" rx="4.500" fill="url(#zg)"/><rect x="717.600" y="554" width="7.600" height="6.500" rx="1.500" fill="#fff"/><path d="M725.800 556.300l3.200-2v6l-3.200-2z" fill="#fff"/>
<rect x="717" y="570.800" width="12.800" height="2.200" rx="1.100" fill="#1a74c8"/>
<!-- tray -->
<path d="M795.800 559l4.500-4.500 4.500 4.500" fill="none" stroke="#333" stroke-width="1.100" stroke-linecap="round" stroke-linejoin="round"/>
<rect x="820.300" y="549.800" width="4.400" height="8" rx="2.200" fill="none" stroke="#3c6fd6" stroke-width="1"/><path d="M818.300 555.500v.8a4.200 4.200 0 0 0 8.400 0v-.8M822.500 560.500v2.200" fill="none" stroke="#3c6fd6" stroke-width="1"/>
<text x="844.800" y="561.400" font-size="10.300" fill="#222" textLength="16.300" lengthAdjust="spacingAndGlyphs">УКР</text>
<g fill="none" stroke="#222" stroke-width="1.100" stroke-linecap="round"><path d="M877 555.200a8.500 8.500 0 0 1 12 0"/><path d="M879 557.500a5.600 5.600 0 0 1 8 0"/><path d="M881 559.700a2.800 2.800 0 0 1 4 0"/></g><circle cx="883" cy="561.500" r=".9" fill="#222"/>
<path d="M896 555.300h2.200l3-2.800v9l-3-2.800h-2.200z" fill="none" stroke="#222" stroke-width=".9" stroke-linejoin="round"/><path d="M903 554.800a3 3 0 0 1 0 4.400M905 553a5.500 5.500 0 0 1 0 8M907 551.500a8 8 0 0 1 0 11" fill="none" stroke="#222" stroke-width=".9" stroke-linecap="round"/>
<rect x="915.500" y="553.300" width="10.500" height="7.400" rx="1.600" fill="none" stroke="#222" stroke-width="1"/><rect x="917.200" y="555" width="6" height="4" rx=".5" fill="#222"/><path d="M927.200 555.800v2.400" stroke="#222" stroke-width="1.200" stroke-linecap="round"/>
<text x="985.400" y="553.900" font-size="10.200" fill="#222" text-anchor="end" textLength="21.400" lengthAdjust="spacingAndGlyphs">14:34</text>
<text x="985.400" y="566.500" font-size="10.200" fill="#222" text-anchor="end" textLength="45.400" lengthAdjust="spacingAndGlyphs">23.02.2022</text>
<circle cx="1001" cy="557" r="6.300" fill="#0f6cbd"/><text x="1001" y="560.400" font-size="9" fill="#fff" text-anchor="middle">1</text>
</svg>
<!--TASK_END-->
</div>

</body>
</html>
